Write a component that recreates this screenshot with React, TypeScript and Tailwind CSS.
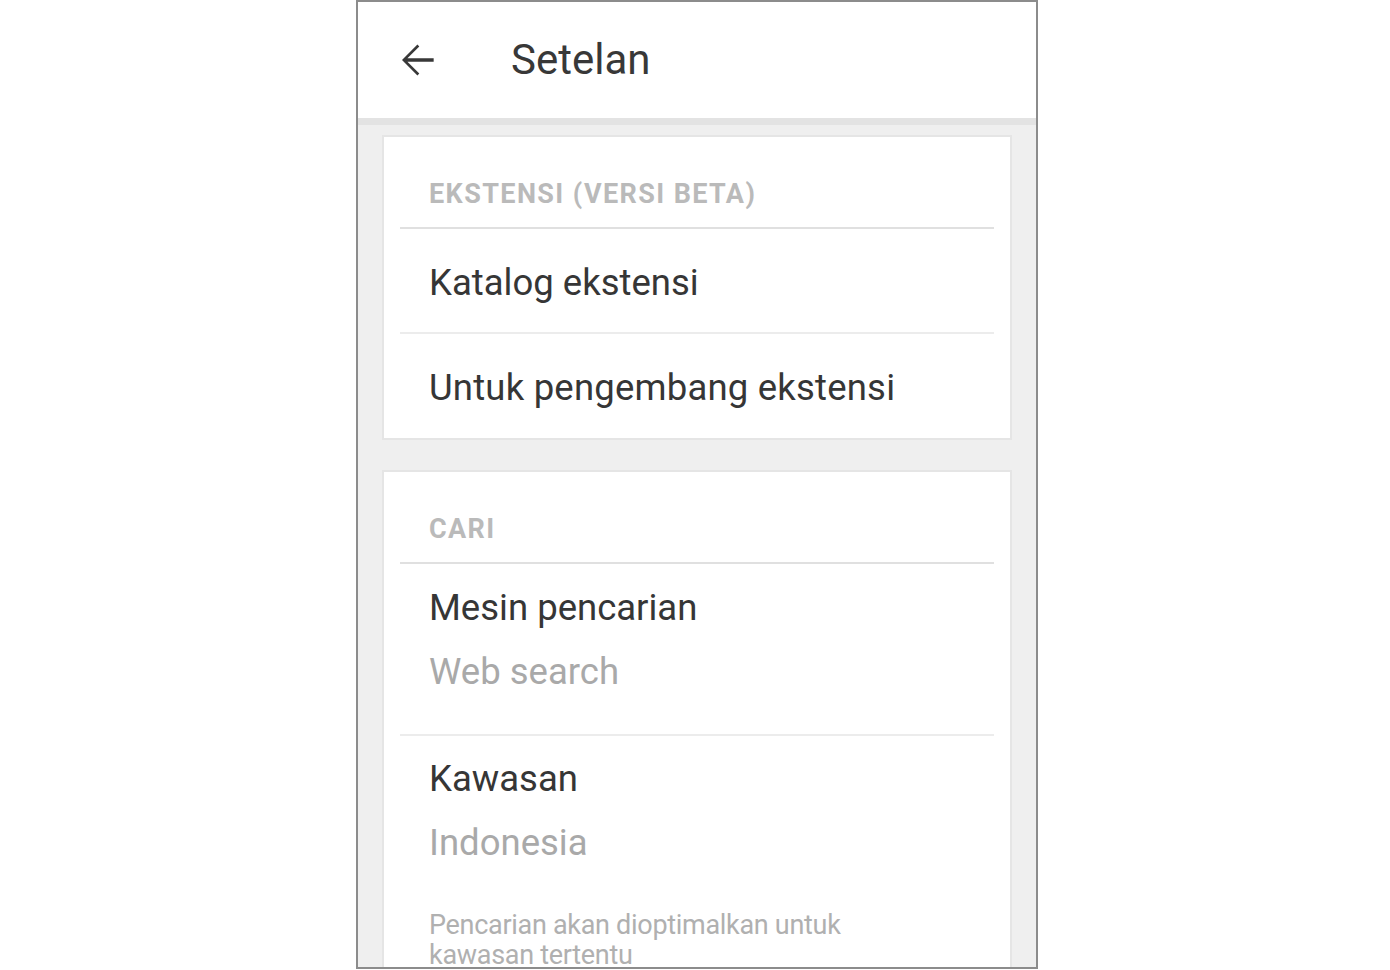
import React, { FC } from 'react'

const SectionHeader: FC<{ title: string }> = ({ title }) => (
    <>
        <div className='pt-[44px] pb-[19px] pl-[45px] text-[27px] leading-[27px] font-bold tracking-[1.4px] text-[#bababa]'>
            {title}
        </div>
        <div className='mx-[16px] h-[2px] bg-[#e0e0e0]' />
    </>
)

const Divider: FC = () => <div className='mx-[16px] h-[2px] bg-[#ececec]' />

const App: FC = () => {
    return (
        <div className="min-h-[970px] bg-white font-['Roboto',sans-serif]">
            <div className='ml-[356px] w-[682px] h-[969px] border-2 border-[#8c8c8c] overflow-hidden flex flex-col'>

                {/* top bar */}
                <header className='h-[116px] shrink-0 bg-white flex items-center'>
                    <svg viewBox='0 0 24 24' className='ml-[34px] w-[50px] h-[50px] fill-[#383838]'>
                        <path d='M20 11.2H7.4l5.7-5.7-.9-.9L4.8 12l7.4 7.4.9-.9-5.7-5.7H20z' />
                    </svg>
                    <h1 className='ml-[69px] text-[42px] leading-[42px] text-[#383838]'>Setelan</h1>
                </header>
                <div className='h-[7px] shrink-0 bg-[#e3e3e3]' />

                <main className='flex-1 bg-[#efefef] pt-[10px] px-[24px] flex flex-col gap-[30px]'>

                    <section className='bg-white border-2 border-[#e5e5e5]'>
                        <SectionHeader title='EKSTENSI (VERSI BETA)' />
                        <div className='pt-[35px] pb-[31px] pl-[45px] text-[36.5px] leading-[37px] text-[#363636]'>
                            Katalog ekstensi
                        </div>
                        <Divider />
                        <div className='pt-[35px] pb-[32px] pl-[45px] text-[36.5px] leading-[37px] tracking-[0.2px] text-[#363636]'>
                            Untuk pengembang ekstensi
                        </div>
                    </section>

                    <section className='bg-white border-2 border-[#e5e5e5] flex-1'>
                        <SectionHeader title='CARI' />
                        <div className='pt-[25px] pb-[44px] pl-[45px] text-[36.5px] leading-[37px]'>
                            <div className='text-[#363636]'>Mesin pencarian</div>
                            <div className='mt-[27px] text-[#a9a9a9]'>Web search</div>
                        </div>
                        <Divider />
                        <div className='pt-[24px] pl-[45px] text-[36.5px] leading-[37px]'>
                            <div className='text-[#363636]'>Kawasan</div>
                            <div className='mt-[27px] text-[#a9a9a9]'>Indonesia</div>
                        </div>
                        <p className='mt-[49px] pl-[45px] max-w-[480px] text-[27px] leading-[30px] tracking-[-0.3px] text-[#b0b0b0]'>
                            Pencarian akan dioptimalkan untuk kawasan tertentu
                        </p>
                    </section>
                </main>
            </div>
        </div>
    )
}

export default App
